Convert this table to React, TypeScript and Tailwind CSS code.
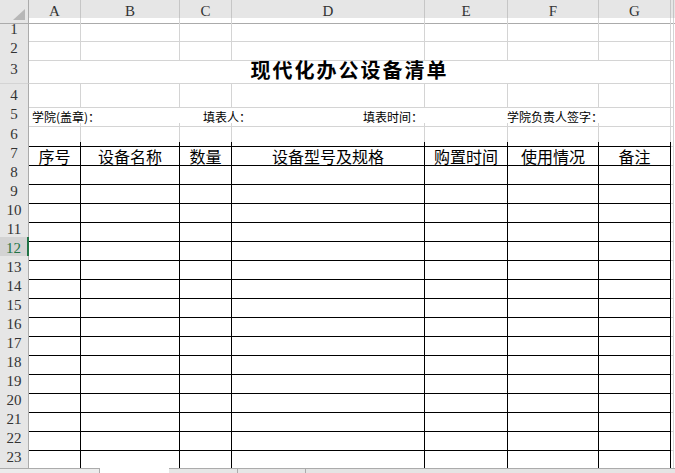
import * as React from 'react';

const COLS = ['A', 'B', 'C', 'D', 'E', 'F', 'G'];
const HEADERS = ['序号', '设备名称', '数量', '设备型号及规格', '购置时间', '使用情况', '备注'];
const ROWS = Array.from({ length: 24 }, (_, i) => i + 1);
const GRID = 'grid grid-cols-[29px_52px_99px_52px_193px_83px_91px_72px_3px_1fr]';

function rowHeight(r: number): string {
  if (r === 3) return 'h-[28px]';
  if (r === 5) return 'h-[20px]';
  return 'h-[19px]';
}

function RowHead({ n }: { n: number }) {
  const active = n === 12;
  // row 24 only shows a 3px sliver under the last full row, so no label
  const label = n < 24 ? n : null;
  return (
    <div
      className={
        active
          ? "flex items-center justify-center border-b border-r-2 border-b-[#d4d4d4] border-r-[#217346] bg-[#d3d3d3] font-['Liberation_Serif',serif] text-[15px] text-[#217346]"
          : "flex items-center justify-center border-b border-r border-b-[#d4d4d4] border-r-[#ababab] bg-[#e6e6e6] font-['Liberation_Serif',serif] text-[15px] text-[#333]"
      }
    >
      {label}
    </div>
  );
}

function SheetRow({ r }: { r: number }) {
  const inTable = r >= 7;

  if (r === 3) {
    return (
      <div className={`${GRID} ${rowHeight(r)}`}>
        <RowHead n={r} />
        <div className="col-span-7 flex items-end justify-center border-b border-r border-[#d4d4d4] pb-[1px] text-[20px] font-bold leading-[24px] tracking-[2px] text-black">
          现代化办公设备清单
        </div>
        <div className="border-b border-r border-[#d4d4d4]" />
        <div />
      </div>
    );
  }

  if (r === 5) {
    return (
      <div className={`${GRID} ${rowHeight(r)}`}>
        <RowHead n={r} />
        <div className="col-span-7 flex items-end border-b border-r border-[#d4d4d4] pl-[3px] pb-[1px] text-[12px] leading-[16px] text-black">
          <span className="w-[171px] shrink-0">学院(盖章)：</span>
          <span className="w-[160px] shrink-0">填表人：</span>
          <span className="w-[144px] shrink-0">填表时间：</span>
          <span className="shrink-0">学院负责人签字：</span>
        </div>
        <div className="border-b border-r border-[#d4d4d4]" />
        <div />
      </div>
    );
  }

  return (
    <div className={`${GRID} ${rowHeight(r)}`}>
      <RowHead n={r} />
      {COLS.map((c, i) => (
        <div
          key={c}
          className={
            inTable
              ? 'flex items-end justify-center border-b border-r border-black text-[16px] leading-[18px] text-black'
              : r === 6
                ? 'border-b border-r border-r-[#d4d4d4] border-b-black'
                : 'border-b border-r border-[#d4d4d4]'
          }
        >
          {r === 7 ? HEADERS[i] : null}
        </div>
      ))}
      <div className="border-b border-r border-[#d4d4d4]" />
      <div />
    </div>
  );
}

export default function App() {
  return (
    <div className="flex h-[473px] w-[675px] flex-col overflow-hidden bg-white font-['Noto_Sans_CJK_SC',sans-serif]">
      <div className="h-[468px] overflow-hidden">
        <div className={`${GRID} h-[18px] bg-[#e6e6e6]`}>
          <div className="relative border-b border-r border-[#ababab]">
            <svg className="absolute bottom-[3px] right-[3px]" width="12" height="11" viewBox="0 0 12 11">
              <polygon points="12,0 12,11 0,11" fill="#b7b7b7" />
            </svg>
          </div>
          {COLS.map((c) => (
            <div
              key={c}
              className="flex items-center justify-center border-b border-r border-b-[#ababab] border-r-[#c6c6c6] font-['Liberation_Serif',serif] text-[15px] text-[#333]"
            >
              {c}
            </div>
          ))}
          <div className="border-b border-r border-b-[#ababab] border-r-[#c6c6c6]" />
          <div className="border-b border-[#ababab]" />
        </div>
        {ROWS.map((r) => (
          <SheetRow key={r} r={r} />
        ))}
      </div>
      <div className="flex h-[5px] bg-[#e4e4e4]">
        <div className="w-[100px] border-r border-t border-[#ababab] bg-[#ececec]" />
        <div className="w-[69px] bg-white" />
        <div className="w-[69px] border-r border-t border-[#ababab] bg-[#e6e6e6]" />
        <div className="w-[68px] border-r border-t border-[#ababab] bg-[#e6e6e6]" />
        <div className="flex-1 border-t border-[#ababab]" />
      </div>
    </div>
  );
}
